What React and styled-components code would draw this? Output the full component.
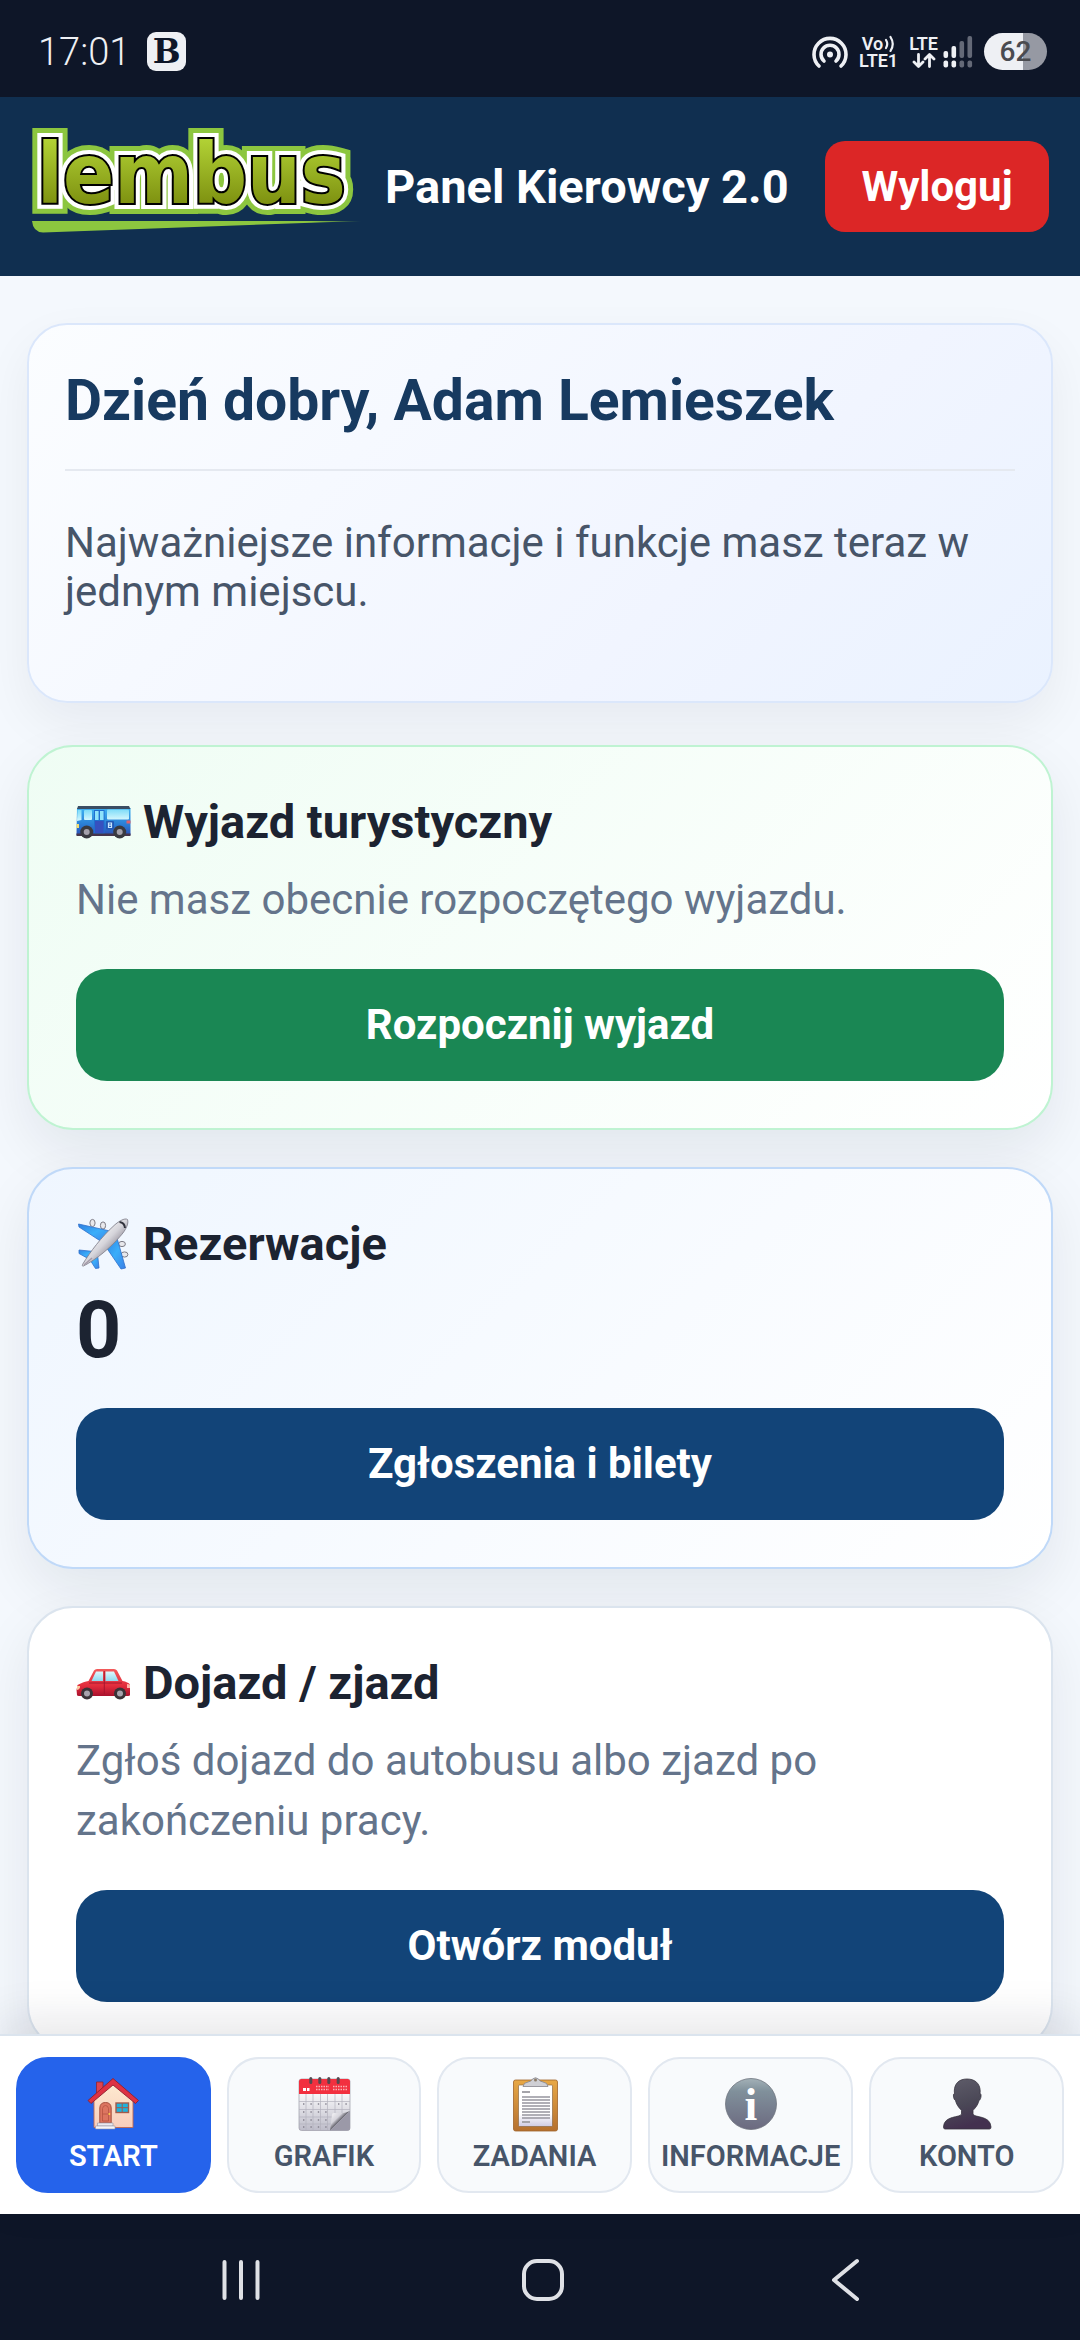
import React from "react";
import styled, { createGlobalStyle } from "styled-components";

const GlobalStyle = createGlobalStyle`
  * { box-sizing: border-box; }
  html, body { margin: 0; padding: 0; }
  body {
    font-family: Roboto, "Noto Sans", sans-serif;
    background: #f4f8fd;
    color: #1c2331;
  }
  h1, h2, p { margin: 0; }
  button { font-family: inherit; border: 0; margin: 0; cursor: pointer; }
  a { color: inherit; text-decoration: none; }
`;

const Screen = styled.div`
  height: 100vh;
  display: flex;
  flex-direction: column;
`;

/* ---------- system status bar ---------- */

const StatusBar = styled.div`
  flex: none;
  height: 97px;
  padding: 6px 33px 0 38px;
  display: flex;
  align-items: center;
  justify-content: space-between;
  background: #0e1628;
  color: #eef0f4;
`;

const StatusGroup = styled.div`
  display: flex;
  align-items: center;
  gap: ${(p) => p.$gap}px;
`;

const Clock = styled.span`
  font-size: 38px;
  line-height: 40px;
  font-weight: 300;
`;

const AppBadge = styled.span`
  width: 39px;
  height: 39px;
  border-radius: 9px;
  background: #eef0f4;
  color: #0e1628;
  display: flex;
  align-items: center;
  justify-content: center;
  font: 700 33px/39px "DejaVu Serif", serif;
`;

const Stack = styled.span`
  display: flex;
  flex-direction: column;
  align-items: center;
  font-size: 18px;
  line-height: 17px;
  font-weight: 600;
`;

const StackLine = styled.span`
  height: 17px;
  display: flex;
  align-items: center;
  gap: 1px;
`;

const Battery = styled.span`
  width: 63px;
  height: 37px;
  border-radius: 19px;
  display: flex;
  align-items: center;
  justify-content: center;
  background: linear-gradient(90deg, #eef0f4 62%, #9699a3 62%);
  color: #4a4b50;
  font-size: 28px;
  line-height: 37px;
  font-weight: 500;
`;

/* ---------- app header ---------- */

const Header = styled.header`
  flex: none;
  height: 179px;
  padding: 0 31px;
  display: flex;
  align-items: center;
  gap: 24px;
  background: #102f50;
`;

const AppTitle = styled.span`
  flex: 1;
  color: #fff;
  font-size: 47px;
  line-height: 56px;
  font-weight: 700;
  white-space: nowrap;
`;

const LogoutButton = styled.button`
  width: 224px;
  height: 91px;
  border-radius: 20px;
  background: #dc2626;
  color: #fff;
  font-size: 42px;
  line-height: 48px;
  font-weight: 700;
`;

/* ---------- content ---------- */

const Main = styled.main`
  flex: 1;
  min-height: 0;
  overflow-y: auto;
  scrollbar-width: none;
  padding: 47px 27px;
`;

const WelcomeCard = styled.section`
  padding: 40px 36px;
  border: 2px solid #dbe7fb;
  border-radius: 40px;
  background: linear-gradient(135deg, #fbfdff 0%, #f1f5ff 65%, #eaf2ff 100%);
  box-shadow: 0 20px 50px rgba(15, 23, 42, 0.06);
`;

const WelcomeTitle = styled.h1`
  padding-bottom: 32px;
  border-bottom: 2px solid #e5e9f0;
  color: #173a60;
  font-size: 57px;
  line-height: 72px;
  font-weight: 700;
`;

const WelcomeText = styled.p`
  padding: 47px 0 45px;
  color: #475569;
  font-size: 42px;
  line-height: 49px;
`;

const CardList = styled.div`
  margin-top: 42px;
  display: flex;
  flex-direction: column;
  gap: 37px;
`;

const tones = {
  green: { border: "#bff3d2", background: "linear-gradient(135deg, #effdf4, #ffffff)" },
  blue: { border: "#c0d9f8", background: "linear-gradient(135deg, #eff6ff, #ffffff)" },
  plain: { border: "#dbe4ee", background: "#ffffff" },
};

const Card = styled.section`
  padding: 47px;
  border: 2px solid ${(p) => tones[p.$tone].border};
  border-radius: 46px;
  background: ${(p) => tones[p.$tone].background};
  box-shadow: 0 22px 56px rgba(15, 23, 42, 0.08);
`;

const CardTitle = styled.h2`
  display: flex;
  align-items: center;
  gap: 11px;
  font-size: 47px;
  line-height: 56px;
  font-weight: 700;
`;

const CardText = styled.p`
  margin-top: 20px;
  color: #64748b;
  font-size: 42px;
  line-height: 60px;
`;

const CardNumber = styled.p`
  margin-top: 20px;
  font-size: 79px;
  line-height: 77px;
  font-weight: 700;
`;

const CardButton = styled.button`
  display: block;
  width: 100%;
  height: 112px;
  margin-top: 39px;
  border-radius: 31px;
  background: ${(p) => (p.$green ? "#1a8754" : "#124478")};
  color: #fff;
  font-size: 42px;
  line-height: 48px;
  font-weight: 700;
`;

/* ---------- bottom navigation ---------- */

const TabBar = styled.nav`
  flex: none;
  position: relative;
  display: grid;
  grid-template-columns: repeat(5, 1fr);
  gap: 16px;
  padding: 21px 16px;
  border-top: 2px solid #dbe4ee;
  background: #fff;
  box-shadow: 0 -14px 42px rgba(15, 23, 42, 0.1);
`;

const Tab = styled.a`
  display: flex;
  flex-direction: column;
  align-items: center;
  gap: 6px;
  padding: 18px 11px;
  border: 2px solid ${(p) => (p.$active ? "#2563eb" : "#e2e8f0")};
  border-radius: 32px;
  background: ${(p) => (p.$active ? "#2563eb" : "#f8fafc")};
  color: ${(p) => (p.$active ? "#fff" : "#475569")};
  font-size: 29px;
  line-height: 34px;
  font-weight: 600;
`;

const SystemNav = styled.div`
  flex: none;
  height: 126px;
  padding: 6px 84px 0 90px;
  display: flex;
  background: #0e1628;
`;

const SystemButton = styled.button`
  flex: 1;
  display: flex;
  align-items: center;
  justify-content: center;
  background: none;
`;

/* ---------- drawings ---------- */

const Icon = ({ children }) => (
  <svg width="56" height="56" viewBox="0 0 56 56" aria-hidden="true">
    {children}
  </svg>
);

const logoFont = {
  x: 6,
  y: 74,
  fontFamily: "'DejaVu Sans Condensed', Roboto, sans-serif",
  fontWeight: 700,
  fontSize: 84,
  paintOrder: "stroke",
};

const Logo = () => (
  <svg width="330" height="140" viewBox="0 -12 330 140" role="img" aria-label="lembus">
    <defs>
      <linearGradient id="logoFill" x1="0" y1="10" x2="0" y2="76" gradientUnits="userSpaceOnUse">
        <stop offset="0" stopColor="#b2d235" />
        <stop offset="1" stopColor="#7d9010" />
      </linearGradient>
      <linearGradient id="logoLine" x1="0" x2="1" y1="0" y2="0">
        <stop offset="0.85" stopColor="#8cc63f" />
        <stop offset="1" stopColor="#8cc63f" stopOpacity="0.3" />
      </linearGradient>
    </defs>
    <text {...logoFont} fill="#8cc63f" stroke="#8cc63f" strokeWidth="22" strokeMiterlimit="2" aria-hidden="true">lembus</text>
    <text {...logoFont} fill="#fff" stroke="#fff" strokeWidth="12" strokeMiterlimit="2" aria-hidden="true">lembus</text>
    <text {...logoFont} fill="url(#logoFill)" stroke="#000" strokeWidth="4">lembus</text>
    <path d="M1 92 H330 L12 103.500 Q2 103 1 92Z" fill="url(#logoLine)" />
  </svg>
);

const HotspotIcon = () => (
  <svg width="36" height="34" viewBox="0 0 36 34" fill="none" stroke="#eef0f4" strokeWidth="3.600" strokeLinecap="round" aria-hidden="true">
    <path d="M7 31 A16 16 0 1 1 29 31" />
    <path d="M12 26 A9 9 0 1 1 24 26" />
    <circle cx="18" cy="19.500" r="3" fill="#eef0f4" stroke="none" />
  </svg>
);

const VoWaves = () => (
  <svg width="11" height="17" viewBox="0 0 11 17" fill="none" stroke="#eef0f4" strokeWidth="2.200" strokeLinecap="round" aria-hidden="true">
    <path d="M2 5 Q4.500 9 2 13" />
    <path d="M6.500 2 Q11 9 6.500 16" />
  </svg>
);

const TrafficArrows = () => (
  <svg width="24" height="15" viewBox="0 0 24 15" fill="none" stroke="#eef0f4" strokeWidth="2.800" strokeLinecap="round" strokeLinejoin="round" aria-hidden="true">
    <path d="M6.500 1.500 V13 M2 9 L6.500 13.500 L11 9" />
    <path d="M17.500 13.500 V2 M13 6 L17.500 1.500 L22 6" />
  </svg>
);

const SignalBars = () => (
  <svg width="30" height="34" viewBox="0 0 30 34" aria-hidden="true">
    {[16, 11, 6, 1].map((top, i) => (
      <g key={top} fill={i < 2 ? "#eef0f4" : "#646977"}>
        <rect x={i * 8 + 0.5} y={top} width="4.600" height={23 - top} rx="2" />
        <rect x={i * 8 + 0.5} y="25.500" width="4.600" height="7" rx="2" />
      </g>
    ))}
  </svg>
);

const BusIcon = () => (
  <Icon>
    <defs>
      <linearGradient id="busBody" x1="0" y1="0" x2="0" y2="1">
        <stop offset="0" stopColor="#3fb2f2" />
        <stop offset="0.6" stopColor="#2a7fd6" />
        <stop offset="1" stopColor="#2d4fb4" />
      </linearGradient>
      <linearGradient id="busGlass" x1="0" y1="0" x2="0" y2="1">
        <stop offset="0" stopColor="#7edcf8" />
        <stop offset="1" stopColor="#d3f6fd" />
      </linearGradient>
    </defs>
    <path d="M1 14 H54.500 V41 H0.500Z" fill="url(#busBody)" />
    <path d="M2 12 H53 L54.500 15 H1Z" fill="#3a4d63" />
    <path d="M1.500 16 H5.500 V26 L1 27Z" fill="url(#busGlass)" />
    <rect x="8" y="16" width="8" height="10" rx="1" fill="url(#busGlass)" />
    <rect x="31" y="15.500" width="22" height="10" rx="1" fill="url(#busGlass)" />
    <rect x="18" y="16" width="10.500" height="24" fill="#1f6fd0" />
    <rect x="19" y="17" width="3.600" height="9" fill="#8fe3fb" />
    <rect x="24" y="17" width="3.600" height="9" fill="#8fe3fb" />
    <rect x="19" y="27" width="8.600" height="12" fill="#3650bf" />
    <rect x="30" y="27" width="8" height="8.500" rx="1" fill="#2259b5" />
    <path d="M32.500 29 H35.500 V33.500 H32.500Z M32.500 31.200 H35.500" fill="none" stroke="#c9e6ff" strokeWidth="1.200" />
    <rect x="0.500" y="39.500" width="54" height="2.500" fill="#46354c" />
    <rect x="0.500" y="30" width="2.500" height="4" fill="#f6df72" />
    <rect x="50.500" y="26.500" width="4" height="3" fill="#e0616c" />
    {[10.7, 43.7].map((cx) => (
      <g key={cx}>
        <circle cx={cx} cy="38" r="6.500" fill="#3a3a40" />
        <circle cx={cx} cy="38" r="3" fill="#a5a1ab" />
      </g>
    ))}
  </Icon>
);

const PlaneIcon = () => (
  <Icon>
    <defs>
      <linearGradient id="planeWing" x1="0" y1="0" x2="1" y2="1">
        <stop offset="0" stopColor="#2f7fe0" />
        <stop offset="0.5" stopColor="#3aaefa" />
        <stop offset="1" stopColor="#3a80e6" />
      </linearGradient>
      <linearGradient id="planeBody" x1="0.300" y1="0.300" x2="0.700" y2="0.700">
        <stop offset="0" stopColor="#f4f4f6" />
        <stop offset="0.5" stopColor="#d5d4da" />
        <stop offset="1" stopColor="#8b8692" />
      </linearGradient>
    </defs>
    <g fill="#e8e8ec" stroke="#7d7c86" strokeWidth="1">
      <ellipse cx="16.500" cy="7" rx="2.600" ry="3.600" />
      <ellipse cx="27" cy="9.500" rx="2.600" ry="3.600" />
      <ellipse cx="46" cy="28" rx="3.400" ry="2.600" />
      <ellipse cx="48.500" cy="38.500" rx="3.400" ry="2.600" />
    </g>
    <g fill="url(#planeWing)" stroke="#2f6fca" strokeWidth="0.800">
      <path d="M2.500 8 L34 15 L26 26 L3 11Z" />
      <path d="M41 22 L49.500 52 L45 53 L30 31Z" />
      <path d="M3 34 L18 35.500 L13 43 L3 37.500Z" />
      <path d="M21.500 38 L23 52 L19.500 52.500 L13.500 43Z" />
    </g>
    <path d="M51.500 3.500 C53 7.500 50 14 44 20.500 C34 32 21 43 7.500 50 C6.500 50.500 6 49.500 6.500 48.500 C14 36 26 20.500 37 10.500 C42 5.500 49 1.500 51.500 3.500Z" fill="url(#planeBody)" stroke="#85838e" strokeWidth="0.900" />
    <path d="M43.500 6 Q48.500 6.500 49 12" fill="none" stroke="#2f313b" strokeWidth="2" />
    <path d="M16 42 L8 49" stroke="#a49aa9" strokeWidth="1.500" />
  </Icon>
);

const CarIcon = () => (
  <Icon>
    <defs>
      <linearGradient id="carBody" x1="0" y1="14" x2="0" y2="42" gradientUnits="userSpaceOnUse">
        <stop offset="0" stopColor="#f25b5b" />
        <stop offset="0.6" stopColor="#e22c3c" />
        <stop offset="1" stopColor="#a40f2c" />
      </linearGradient>
      <linearGradient id="carGlass" x1="0" y1="0" x2="0" y2="1">
        <stop offset="0" stopColor="#dff9fd" />
        <stop offset="1" stopColor="#8fd9ee" />
      </linearGradient>
    </defs>
    <path d="M1 40 Q0 34 1.500 30 Q8 26.500 12.500 26 L18 15.500 Q19 14 21 14 H38 Q40 14 41 15.500 L46.500 26 Q52 27 54 29.500 V40 Q54 41 52 41 H3 Q1 41 1 40Z" fill="url(#carBody)" />
    <path d="M20 16.500 H27 V26 H15.500Z" fill="url(#carGlass)" />
    <path d="M29.500 16.500 H38 L42.500 26 H29.500Z" fill="url(#carGlass)" />
    <path d="M13 28 H46 M28.300 16 V39" stroke="#a3142c" strokeWidth="0.900" />
    <path d="M1 31 H4 Q4.500 34 1 35Z" fill="#fbc9a0" />
    <path d="M51 29 L54 29.500 V33 H51Z" fill="#ffb3a6" />
    {[11, 44].map((cx) => (
      <g key={cx}>
        <circle cx={cx} cy="38.500" r="6" fill="#3a3338" />
        <circle cx={cx} cy="38.500" r="3" fill="#a7a3ad" />
      </g>
    ))}
  </Icon>
);

const HouseIcon = () => (
  <Icon>
    <defs>
      <linearGradient id="houseWall" x1="0" y1="0" x2="0" y2="1">
        <stop offset="0" stopColor="#fdebd0" />
        <stop offset="1" stopColor="#f9cdbc" />
      </linearGradient>
    </defs>
    <path d="M11.500 5 H18 V18 H11.500Z" fill="#dd4350" stroke="#8e2431" strokeWidth="0.800" />
    <path d="M9 21 L28 5 L48 21 V50.500 H9Z" fill="url(#houseWall)" stroke="#c0674f" strokeWidth="0.900" />
    <path d="M28 1.500 L53.500 23.500 L50.500 26.500 L28 8 L6 26.500 L3 23.500Z" fill="#dd3244" stroke="#8e1f2e" strokeWidth="0.900" strokeLinejoin="round" />
    <path d="M14.800 46 V31 Q15 25.500 20.500 25.500 Q26 25.500 26.200 31 V46Z" fill="#dd7560" stroke="#a8513f" strokeWidth="1" />
    <path d="M17.500 44 V31.500 Q18 28.500 20.500 28.500 Q23 28.500 23.500 31.500 V44Z M17.500 37 H23.500" fill="none" stroke="#b95745" strokeWidth="0.900" />
    <circle cx="24.300" cy="37" r="1" fill="#ffd24d" />
    <rect x="31" y="26" width="12.500" height="9.500" fill="#1fb3dc" stroke="#a35b4b" strokeWidth="1.400" />
    <path d="M37.200 26 V35.500 M31 30.700 H43.500" stroke="#a35b4b" strokeWidth="1" />
    <path d="M12.500 46 H28 V49 H12.500Z" fill="#eceaf0" stroke="#9593a5" strokeWidth="0.600" />
    <path d="M10.500 49 H30 V52 H10.500Z" fill="#f6f5f8" stroke="#9593a5" strokeWidth="0.600" />
  </Icon>
);

const CalendarIcon = () => (
  <Icon>
    <defs>
      <linearGradient id="calPage" x1="0" y1="0" x2="0" y2="1">
        <stop offset="0.200" stopColor="#ffffff" />
        <stop offset="1" stopColor="#bdbcc9" />
      </linearGradient>
      <linearGradient id="calCurl" x1="0" y1="0" x2="1" y2="1">
        <stop offset="0" stopColor="#ffffff" />
        <stop offset="0.35" stopColor="#d5d4dc" />
        <stop offset="0.5" stopColor="#5e5d66" />
      </linearGradient>
    </defs>
    <rect x="3" y="2" width="51" height="51.500" rx="2.500" fill="url(#calPage)" stroke="#9c9ba8" strokeWidth="0.700" />
    <path d="M3 17 V4.500 Q3 2 5.500 2 H51.500 Q54 2 54 4.500 V17Z" fill="#f2303f" />
    <path d="M7 12.500 H10 M11 12.500 H13.500" stroke="#fff" strokeWidth="3" />
    <path d="M20 9.500 H33 M20 12.500 H33 M37 9.500 H51 M37 12.500 H51" stroke="#fbb0b4" strokeWidth="1.400" strokeDasharray="1.500 1" />
    <path d="M10 17 V53 M17 17 V53 M24.500 17 V53 M31.500 17 V53 M39 17 V36 M46 17 V36 M3 24.500 H54 M3 32.500 H54 M3 40 H38 M3 47 H37" stroke="#b3b2bd" strokeWidth="0.700" />
    <path d="M7 27 H31 M7 35 H31 M7 43 H31 M7 50 H31 M42 27 H52" stroke="#85838f" strokeWidth="1.300" strokeDasharray="1.400 6" />
    <path d="M54 34 L34 53.500 L36 38 Q36 36 38 36 Q48 37 54 34Z" fill="url(#calCurl)" />
    <path d="M54 34 V51 Q54 53.500 51.500 53.500 H34Z" fill="#9b99a8" />
    {[14.8, 23.8, 32.8, 42.2].map((x) => (
      <path key={x} d={`M${x} 1.500 V5.500`} stroke="#55484f" strokeWidth="3" strokeLinecap="round" />
    ))}
  </Icon>
);

const ClipboardIcon = () => (
  <Icon>
    <defs>
      <linearGradient id="clipBoard" x1="0" y1="0" x2="0" y2="1">
        <stop offset="0" stopColor="#e8a845" />
        <stop offset="1" stopColor="#b5702f" />
      </linearGradient>
      <linearGradient id="clipPage" x1="0" y1="0" x2="0" y2="1">
        <stop offset="0.7" stopColor="#ffffff" />
        <stop offset="1" stopColor="#cfcbe4" />
      </linearGradient>
    </defs>
    <rect x="6.500" y="3" width="44" height="51" rx="2" fill="url(#clipBoard)" stroke="#a0632a" strokeWidth="0.800" />
    <rect x="11.500" y="8" width="34" height="41.500" rx="1" fill="url(#clipPage)" stroke="#8e6a44" strokeWidth="0.700" />
    <path d="M16 9.500 Q16.500 5.500 21 5 Q24.500 4.500 25.500 2 Q28.500 -0.500 31.500 2 Q32.500 4.500 36 5 Q40.500 5.500 41 9.500Z" fill="#cfcfd4" stroke="#85848c" strokeWidth="0.800" />
    <circle cx="28.500" cy="3" r="1.500" fill="#8b7b66" />
    <path d="M15 15 H23 M15 45 H23" stroke="#a5a4aa" strokeWidth="1.800" />
    <path d="M15 20 H43 M15 23 H43 M15 26 H43 M15 29 H43 M15 32 H43 M15 35 H43 M15 38 H43 M15 41 H43" stroke="#96959e" strokeWidth="1.500" />
  </Icon>
);

const InfoIcon = () => (
  <Icon>
    <defs>
      <linearGradient id="infoDisc" x1="0" y1="0" x2="0" y2="1">
        <stop offset="0" stopColor="#a3b1b7" />
        <stop offset="0.25" stopColor="#80909b" />
        <stop offset="1" stopColor="#6c6a80" />
      </linearGradient>
    </defs>
    <circle cx="28" cy="27" r="25.500" fill="url(#infoDisc)" stroke="#70757f" strokeWidth="0.800" />
    <text x="28" y="43" textAnchor="middle" fontFamily="'Liberation Serif', serif" fontWeight="700" fontSize="46" fill="#fff">i</text>
  </Icon>
);

const PersonIcon = () => (
  <Icon>
    <defs>
      <linearGradient id="personFill" x1="0" y1="0" x2="0.300" y2="1">
        <stop offset="0" stopColor="#605e6b" />
        <stop offset="0.6" stopColor="#4a4756" />
        <stop offset="1" stopColor="#43304f" />
      </linearGradient>
    </defs>
    <path d="M28 2 C36 2 41 6.500 41.200 14 L41 16.500 C42.800 16.500 42.200 22.500 40 23.500 C38.500 29 36 31 34 33.500 V37 C35 41 51.500 38 52 50 Q52 52 50.500 52 H6 Q4.500 52 4.500 50 C5 38 21.500 41 22.500 37 V33.500 C20.500 31 18 29 16.500 23.500 C14.300 22.500 13.700 16.500 15.500 16.500 L15.300 14 C15.500 6.500 20 2 28 2Z" fill="url(#personFill)" stroke="#37333f" strokeWidth="0.800" />
  </Icon>
);

const SystemIcon = ({ children }) => (
  <svg width="44" height="44" viewBox="0 0 44 44" fill="none" stroke="#dfe1e6" strokeWidth="4" strokeLinecap="round" strokeLinejoin="round" aria-hidden="true">
    {children}
  </svg>
);

/* ---------- data ---------- */

const cards = [
  { tone: "green", icon: BusIcon, title: "Wyjazd turystyczny", text: "Nie masz obecnie rozpoczętego wyjazdu.", action: "Rozpocznij wyjazd" },
  { tone: "blue", icon: PlaneIcon, title: "Rezerwacje", number: "0", action: "Zgłoszenia i bilety" },
  { tone: "plain", icon: CarIcon, title: "Dojazd / zjazd", text: "Zgłoś dojazd do autobusu albo zjazd po zakończeniu pracy.", action: "Otwórz moduł" },
];

const tabs = [
  { label: "START", icon: HouseIcon, active: true },
  { label: "GRAFIK", icon: CalendarIcon },
  { label: "ZADANIA", icon: ClipboardIcon },
  { label: "INFORMACJE", icon: InfoIcon },
  { label: "KONTO", icon: PersonIcon },
];

export default function App() {
  return (
    <Screen>
      <GlobalStyle />
      <StatusBar>
        <StatusGroup $gap={17}>
          <Clock>17:01</Clock>
          <AppBadge>B</AppBadge>
        </StatusGroup>
        <StatusGroup $gap={11}>
          <HotspotIcon />
          <Stack>
            <StackLine>Vo<VoWaves /></StackLine>
            <StackLine>LTE1</StackLine>
          </Stack>
          <StatusGroup $gap={5}>
            <Stack>
              <StackLine>LTE</StackLine>
              <StackLine><TrafficArrows /></StackLine>
            </Stack>
            <SignalBars />
          </StatusGroup>
          <Battery>62</Battery>
        </StatusGroup>
      </StatusBar>

      <Header>
        <Logo />
        <AppTitle>Panel Kierowcy 2.0</AppTitle>
        <LogoutButton type="button">Wyloguj</LogoutButton>
      </Header>

      <Main>
        <WelcomeCard>
          <WelcomeTitle>Dzień dobry, Adam Lemieszek</WelcomeTitle>
          <WelcomeText>Najważniejsze informacje i funkcje masz teraz w jednym miejscu.</WelcomeText>
        </WelcomeCard>
        <CardList>
          {cards.map(({ tone, icon: CardIcon, title, text, number, action }) => (
            <Card key={title} $tone={tone}>
              <CardTitle><CardIcon />{title}</CardTitle>
              {text && <CardText>{text}</CardText>}
              {number && <CardNumber>{number}</CardNumber>}
              <CardButton type="button" $green={tone === "green"}>{action}</CardButton>
            </Card>
          ))}
        </CardList>
      </Main>

      <TabBar>
        {tabs.map(({ label, icon: TabIcon, active }) => (
          <Tab key={label} href={`#${label.toLowerCase()}`} $active={active}>
            <TabIcon />
            {label}
          </Tab>
        ))}
      </TabBar>

      <SystemNav>
        <SystemButton type="button" aria-label="Ostatnie">
          <SystemIcon><path d="M5.500 4 V40 M22 4 V40 M38.500 4 V40" /></SystemIcon>
        </SystemButton>
        <SystemButton type="button" aria-label="Ekran główny">
          <SystemIcon><rect x="3" y="3" width="38" height="38" rx="13" /></SystemIcon>
        </SystemButton>
        <SystemButton type="button" aria-label="Wstecz">
          <SystemIcon><path d="M34 3 L11 22 L34 41" /></SystemIcon>
        </SystemButton>
      </SystemNav>
    </Screen>
  );
}
